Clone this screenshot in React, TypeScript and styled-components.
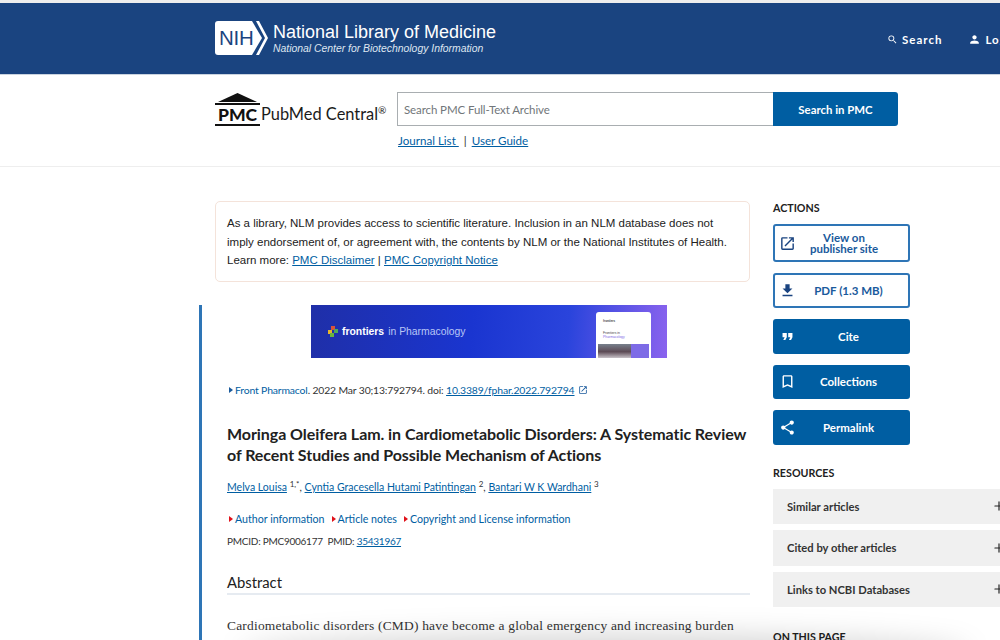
import React from 'react';
import styled, { createGlobalStyle } from 'styled-components';
import { Plus } from 'lucide-react';
import { MdBookmarkBorder, MdFileDownload, MdFormatQuote, MdOpenInNew, MdPerson, MdSearch, MdShare } from 'react-icons/md';

const sans = 'Lato, "Noto Sans", sans-serif';

const GlobalStyle = createGlobalStyle`
  html, body {
    margin: 0;
    padding: 0;
    background: #fff;
    overflow: hidden;
  }
  body {
    font-family: ${sans};
    color: #212121;
  }
  a {
    color: #005ea2;
  }
`;

const Page = styled.div`
  position: relative;
  width: 1000px;
  height: 640px;
  overflow: hidden;
`;

const TopStrip = styled.div`
  height: 3px;
  background: #eeeeee;
`;

const NihBar = styled.header`
  height: 72px;
  box-sizing: border-box;
  background: #1a4480;
  border-bottom: 1px solid #c9d3df;
  padding-left: 215px;
  display: flex;
  align-items: center;
`;

const NihLogo = styled.div`
  width: 53px;
  height: 34px;
  margin-top: -2px;
  position: relative;
  flex: none;
`;

const NihMark = styled.svg`
  display: block;
`;

const NihLetters = styled.span`
  position: absolute;
  left: 4px;
  top: 6px;
  font: 400 20.5px/22px "Liberation Sans", Arial, sans-serif;
  letter-spacing: -0.3px;
  color: #1a4480;
`;

const NihTitles = styled.div`
  margin-left: 5px;
  margin-top: -1px;
  width: 240px;
  flex: none;
  color: #fff;
  font-family: "Liberation Sans", Arial, sans-serif;
  white-space: nowrap;
`;

const NihName = styled.div`
  font-size: 18px;
  line-height: 20px;
`;

const NihSub = styled.div`
  font-size: 10.4px;
  line-height: 13px;
  font-style: italic;
  color: #dfe6f0;
`;

const NihTools = styled.nav`
  margin-left: 374px;
  flex: none;
  display: flex;
  align-items: center;
  gap: 26px;
  white-space: nowrap;
`;

const NihTool = styled.span`
  display: flex;
  align-items: center;
  gap: 4px;
  color: #fff;
  font-size: 11.5px;
  font-weight: 700;
  letter-spacing: 1px;
  margin-top: 2px;
`;

const SearchBand = styled.section`
  height: 92px;
  box-sizing: border-box;
  border-bottom: 1px solid #eeeeee;
  padding: 17px 0 0 215px;
  display: flex;
`;

const PmcBrand = styled.div`
  width: 182px;
  height: 35px;
  display: flex;
  align-items: flex-end;
  flex: none;
`;

const PmcBadge = styled.div`
  width: 45px;
  height: 34px;
  flex: none;
`;

const PmcRoof = styled.svg`
  display: block;
`;

const PmcLetters = styled.span`
  display: block;
  margin-top: -1px;
  border-bottom: 2px solid #111;
  font: 900 17.5px/18px ${sans};
  text-align: center;
  color: #111;
`;

const PmcName = styled.span`
  margin-left: 1px;
  margin-bottom: 3px;
  font-size: 16.4px;
  line-height: 20px;
  color: #1b1b1b;
  white-space: nowrap;

  sup {
    font-size: 10px;
    line-height: 0;
  }
`;

const SearchColumn = styled.div`
  display: flex;
  flex-direction: column;
`;

const SearchRow = styled.div`
  display: flex;
  height: 34px;
`;

const SearchField = styled.div`
  width: 376px;
  box-sizing: border-box;
  border: 1px solid #a9aeb1;
  border-right: 0;
  padding: 0 6px;
  display: flex;
  align-items: center;
  font-size: 11.5px;
  letter-spacing: -0.1px;
  color: #71767a;
`;

const SearchButton = styled.button`
  width: 125px;
  border: 0;
  padding: 0;
  border-radius: 0 3px 3px 0;
  background: #005ea2;
  color: #fff;
  font: 700 11.4px ${sans};
`;

const SearchLinks = styled.div`
  margin-top: 7px;
  padding-left: 1px;
  display: flex;
  align-items: center;
  gap: 5px;
  font-size: 11.6px;
  line-height: 16px;

  span {
    color: #333;
  }
`;

const Columns = styled.div`
  display: flex;
  align-items: flex-start;
`;

const MainColumn = styled.main`
  width: 574px;
  margin-left: 199px;
  flex: none;
`;

const Notice = styled.aside`
  margin: 34px 23px 0 16px;
  box-sizing: border-box;
  height: 81px;
  border: 1px solid #f4e3da;
  border-radius: 5px;
  padding: 12px 11px 0;
  font: 11.5px/18.7px "Liberation Sans", Arial, sans-serif;
  color: #222;
  white-space: nowrap;
`;

const Article = styled.article`
  margin-top: 23px;
  width: 551px;
  box-sizing: border-box;
  border-left: 3px solid #2e75b6;
  padding: 0 0 20px 25px;
`;

const Banner = styled.div`
  position: relative;
  margin-left: 84px;
  width: 356px;
  height: 53px;
  overflow: hidden;
  display: flex;
  align-items: center;
  padding-left: 17px;
  box-sizing: border-box;
  gap: 3px;
  background: linear-gradient(95deg, #1f2fa8 0%, #1a35d0 45%, #2a44dc 72%, #8a63ee 100%);
`;

const BannerMark = styled.svg`
  flex: none;
`;

const BannerName = styled.span`
  font: 700 10.4px "Liberation Sans", Arial, sans-serif;
  color: #fff;
`;

const BannerField = styled.span`
  font: 400 10.4px "Liberation Sans", Arial, sans-serif;
  color: #b9c6f5;
  margin-left: 1px;
`;

const BannerCard = styled.div`
  position: absolute;
  left: 285px;
  top: 7px;
  width: 55px;
  height: 46px;
  border-radius: 3px 3px 0 0;
  background: #fff;
  overflow: hidden;
`;

const CardBrand = styled.div`
  padding: 7px 0 0 7px;
  height: 5px;
  font: 700 3px/4px "Liberation Sans", Arial, sans-serif;
  color: #444;
`;

const CardCaption = styled.div`
  padding: 7px 0 0 7px;
  height: 13px;
  font: 400 3.4px/4px "Liberation Sans", Arial, sans-serif;
  color: #444;

  span {
    color: #7d6be6;
  }
`;

const CardFigure = styled.div`
  margin: 0 2px;
  height: 14px;
  display: flex;
`;

const CardPhoto = styled.div`
  width: 33px;
  background: linear-gradient(180deg, #77808c, #5c4a55 55%, #c8c2c8);
`;

const CardPanel = styled.div`
  flex: 1;
  background: #7d6be6;
`;

const Citation = styled.div`
  margin-top: 24px;
  display: flex;
  align-items: center;
  font-size: 10.4px;
  letter-spacing: -0.15px;
  line-height: 16px;
  color: #333;
  white-space: nowrap;

  a.plain {
    text-decoration: none;
  }
`;

const CitationIcon = styled(MdOpenInNew)`
  margin-left: 3px;
  color: #1a5a9c;
`;

const Caret = styled.span<{ $color: string }>`
  display: inline-block;
  flex: none;
  width: 0;
  height: 0;
  margin: 0 2px 0 2px;
  border-left: 4px solid ${(p) => p.$color};
  border-top: 3.5px solid transparent;
  border-bottom: 3.5px solid transparent;
`;

const Title = styled.h1`
  margin: 25px 0 0;
  width: 525px;
  font-size: 16px;
  letter-spacing: -0.06px;
  line-height: 21px;
  font-weight: 700;
  color: #212121;
`;

const Authors = styled.div`
  margin-top: 14px;
  font-size: 10.5px;
  line-height: 16px;
  color: #333;
  white-space: nowrap;

  sup {
    font-size: 8px;
    line-height: 0;
  }
`;

const Disclosures = styled.div`
  margin-top: 16px;
  display: flex;
  gap: 5px;
  font-size: 10.65px;
  line-height: 16px;
  white-space: nowrap;
`;

const Disclosure = styled.a`
  display: flex;
  align-items: center;
  text-decoration: none;
`;

const Ids = styled.div`
  margin-top: 6px;
  font-size: 10px;
  letter-spacing: -0.25px;
  line-height: 16px;
  color: #333;
  white-space: nowrap;
`;

const AbstractHeading = styled.h2`
  margin: 23px 0 0;
  width: 523px;
  height: 21px;
  border-bottom: 2px solid #e6ebf1;
  font-size: 14.8px;
  line-height: 20px;
  font-weight: 400;
  color: #212121;
`;

const AbstractText = styled.p`
  margin: 21px 0 0;
  font: 400 13.45px/20px "Liberation Serif", "Times New Roman", serif;
  letter-spacing: 0.21px;
  color: #333;
  white-space: nowrap;
`;

const Sidebar = styled.div`
  width: 260px;
  flex: none;
  padding-top: 33px;
`;

const SideHeading = styled.h3`
  margin: 0;
  font-size: 10.7px;
  line-height: 16px;
  font-weight: 700;
  color: #212121;
`;

const ActionList = styled.div`
  margin-top: 8px;
  width: 137px;
  display: flex;
  flex-direction: column;
  gap: 11px;
`;

const Action = styled.a<{ $filled?: boolean; $tall?: boolean }>`
  box-sizing: border-box;
  height: ${(p) => (p.$tall ? '38px' : p.$filled ? '34.5px' : '35px')};
  border: 2px solid ${(p) => (p.$filled ? '#005ea2' : '#2e75b6')};
  border-radius: 3px;
  background: ${(p) => (p.$filled ? '#005ea2' : '#fff')};
  color: ${(p) => (p.$filled ? '#fff' : '#1a5a9c')};
  display: flex;
  align-items: center;
  padding-left: 4px;
  font-size: 11.5px;
  line-height: 11px;
  font-weight: 700;
  text-decoration: none;
`;

const ActionIcon = styled.span`
  width: 18px;
  flex: none;
  display: flex;
  align-items: center;
`;

const ActionLabel = styled.span<{ $shifted?: boolean }>`
  flex: 1;
  text-align: center;
  padding-right: ${(p) => (p.$shifted ? '17px' : '8px')};
`;

const ResourcesHeading = styled(SideHeading)`
  margin-top: 20px;
`;

const ResourceList = styled.div`
  margin-top: 8px;
  display: flex;
  flex-direction: column;
  gap: 6px;
`;

const Resource = styled.div`
  height: 35.5px;
  width: 240px;
  background: #f0f0f0;
  display: flex;
  align-items: center;
  justify-content: space-between;
  padding-left: 14px;
  box-sizing: border-box;
  font-size: 11.2px;
  font-weight: 700;
  color: #333;
`;

const ResourcePlus = styled(Plus)`
  margin-right: 7px;
  color: #222;
`;

const OnPageHeading = styled(SideHeading)`
  margin-top: 22px;
`;

const BottomShade = styled.div`
  position: absolute;
  left: 240px;
  right: 30px;
  bottom: -34px;
  height: 40px;
  border-radius: 50%;
  background: rgba(0, 0, 0, 0.16);
  filter: blur(14px);
  pointer-events: none;
`;

const App: React.FC = () => {
  return (
    <Page>
      <GlobalStyle />
      <TopStrip />
      <NihBar>
        <NihLogo>
          <NihMark width="53" height="34" viewBox="0 0 53 34">
            <path d="M3 0H37L47 17L37 34H3Q0 34 0 31V3Q0 0 3 0Z" fill="#fff" />
            <path d="M41 0H44L53 17L44 34H41L50 17Z" fill="#fff" />
          </NihMark>
          <NihLetters>NIH</NihLetters>
        </NihLogo>
        <NihTitles>
          <NihName>National Library of Medicine</NihName>
          <NihSub>National Center for Biotechnology Information</NihSub>
        </NihTitles>
        <NihTools>
          <NihTool>
            <MdSearch size={11} />
            Search
          </NihTool>
          <NihTool>
            <MdPerson size={13} />
            Log in
          </NihTool>
        </NihTools>
      </NihBar>

      <SearchBand>
        <PmcBrand>
          <PmcBadge>
            <PmcRoof width="45" height="14" viewBox="0 0 45 14">
              <path d="M22.5 0L42 9H3Z" fill="#111" />
              <rect x="0" y="10" width="45" height="2" fill="#111" />
            </PmcRoof>
            <PmcLetters>PMC</PmcLetters>
          </PmcBadge>
          <PmcName>
            PubMed Central<sup>®</sup>
          </PmcName>
        </PmcBrand>
        <SearchColumn>
          <SearchRow>
            <SearchField>Search PMC Full-Text Archive</SearchField>
            <SearchButton>Search in PMC</SearchButton>
          </SearchRow>
          <SearchLinks>
            <a href="#journals">Journal List&nbsp;</a>
            <span>|</span>
            <a href="#guide">User Guide</a>
          </SearchLinks>
        </SearchColumn>
      </SearchBand>

      <Columns>
        <MainColumn>
          <Notice>
            As a library, NLM provides access to scientific literature. Inclusion in an NLM database does not
            <br />
            imply endorsement of, or agreement with, the contents by NLM or the National Institutes of Health.
            <br />
            Learn more: <a href="#disclaimer">PMC Disclaimer</a> | <a href="#copyright">PMC Copyright Notice</a>
          </Notice>

          <Article>
            <Banner>
              <BannerMark width="11" height="11" viewBox="0 0 11 11">
                <rect x="0" y="4" width="4" height="4" fill="#e8b62c" />
                <rect x="3" y="0" width="4" height="4" fill="#d8553a" />
                <rect x="6" y="3" width="4" height="4" fill="#4fa85a" />
                <rect x="2" y="7" width="4" height="4" fill="#6cb33f" />
              </BannerMark>
              <BannerName>frontiers</BannerName>
              <BannerField>in Pharmacology</BannerField>
              <BannerCard>
                <CardBrand>frontiers</CardBrand>
                <CardCaption>
                  Frontiers in
                  <br />
                  <span>Pharmacology</span>
                </CardCaption>
                <CardFigure>
                  <CardPhoto />
                  <CardPanel />
                </CardFigure>
              </BannerCard>
            </Banner>

            <Citation>
              <Caret $color="#1a5a9c" />
              <a className="plain" href="#journal">Front Pharmacol</a>. 2022 Mar 30;13:792794. doi:&nbsp;
              <a href="#doi">10.3389/fphar.2022.792794</a>
              <CitationIcon size={10} />
            </Citation>

            <Title>
              Moringa Oleifera Lam. in Cardiometabolic Disorders: A Systematic Review
              <br />
              of Recent Studies and Possible Mechanism of Actions
            </Title>

            <Authors>
              <a href="#a1">Melva Louisa</a> <sup>1,*</sup>, <a href="#a2">Cyntia Gracesella Hutami Patintingan</a>{' '}
              <sup>2</sup>, <a href="#a3">Bantari W K Wardhani</a> <sup>3</sup>
            </Authors>

            <Disclosures>
              <Disclosure href="#info">
                <Caret $color="#e0121a" />
                Author information
              </Disclosure>
              <Disclosure href="#notes">
                <Caret $color="#e0121a" />
                Article notes
              </Disclosure>
              <Disclosure href="#license">
                <Caret $color="#e0121a" />
                Copyright and License information
              </Disclosure>
            </Disclosures>

            <Ids>
              PMCID: PMC9006177&nbsp; PMID: <a href="#pmid">35431967</a>
            </Ids>

            <AbstractHeading>Abstract</AbstractHeading>
            <AbstractText>
              Cardiometabolic disorders (CMD) have become a global emergency and increasing burden
            </AbstractText>
          </Article>
        </MainColumn>

        <Sidebar>
          <SideHeading>ACTIONS</SideHeading>
          <ActionList>
            <Action $tall href="#publisher">
              <ActionIcon>
                <MdOpenInNew size={17} color="#1a4480" />
              </ActionIcon>
              <ActionLabel $shifted>
                View on
                <br />
                publisher site
              </ActionLabel>
            </Action>
            <Action href="#pdf">
              <ActionIcon>
                <MdFileDownload size={17} color="#1a4480" />
              </ActionIcon>
              <ActionLabel>PDF (1.3 MB)</ActionLabel>
            </Action>
            <Action $filled href="#cite">
              <ActionIcon>
                <MdFormatQuote size={17} color="#fff" />
              </ActionIcon>
              <ActionLabel>Cite</ActionLabel>
            </Action>
            <Action $filled href="#collections">
              <ActionIcon>
                <MdBookmarkBorder size={17} color="#fff" />
              </ActionIcon>
              <ActionLabel>Collections</ActionLabel>
            </Action>
            <Action $filled href="#permalink">
              <ActionIcon>
                <MdShare size={17} color="#fff" />
              </ActionIcon>
              <ActionLabel>Permalink</ActionLabel>
            </Action>
          </ActionList>

          <ResourcesHeading>RESOURCES</ResourcesHeading>
          <ResourceList>
            <Resource>
              Similar articles
              <ResourcePlus size={14} />
            </Resource>
            <Resource>
              Cited by other articles
              <ResourcePlus size={14} />
            </Resource>
            <Resource>
              Links to NCBI Databases
              <ResourcePlus size={14} />
            </Resource>
          </ResourceList>
          <OnPageHeading>ON THIS PAGE</OnPageHeading>
        </Sidebar>
      </Columns>
      <BottomShade />
    </Page>
  );
};

export default App;
